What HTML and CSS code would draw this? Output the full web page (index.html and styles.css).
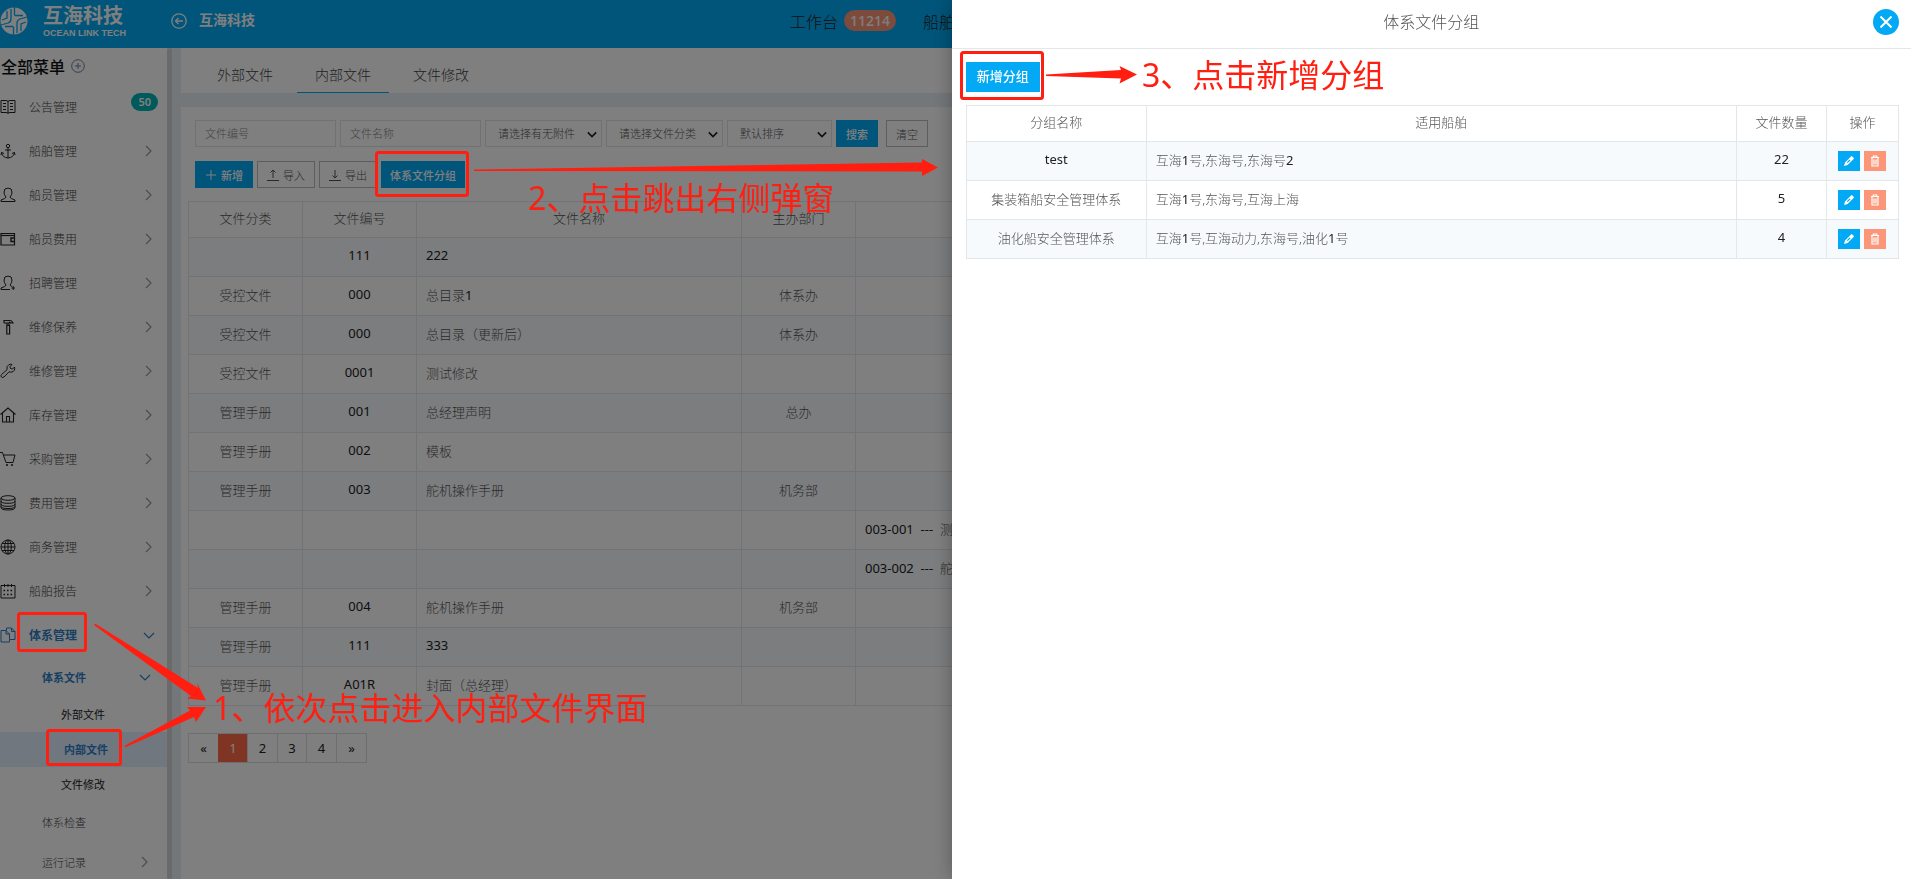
FILE: index.html
```html
<!DOCTYPE html>
<html lang="zh-CN">
<head>
<meta charset="utf-8">
<title>体系文件分组</title>
<link rel="stylesheet" href="styles.css">
</head>
<body>
<svg class="defs" aria-hidden="true">
  <symbol id="chev-r" viewBox="0 0 12 12"><path d="M3 1l5 5-5 5"/></symbol>
  <symbol id="chev-d" viewBox="0 0 12 12"><path d="M1 4l5 5 5-5"/></symbol>
  <symbol id="pencil" viewBox="0 0 12 12"><path d="M1 11l1-3.6L8 1.4q.6-.6 1.300 0l1.300 1.300q.6.6 0 1.300L4.600 10z" fill="#fff"/><path d="M4.300 7.700L7 5" stroke="#03a9f4" stroke-width="1.200"/></symbol>
  <symbol id="trash" viewBox="0 0 12 12"><path d="M2 2.500h8M4.300 2V1h3.400v1M3 3v8h6V3M5 4.500v5M7 4.500v5" fill="none" stroke="#fff" stroke-width="1.200"/></symbol>
</svg>
<div class="app">
  <header class="topbar">
    <div class="logo">
      <svg width="28" height="28" viewBox="0 0 28 28"><circle cx="14" cy="14" r="13.500" fill="#fff"/><path d="M14.500 0v8.500M15 8.500h8M11 2v10q0 3-3 4l-7 2M7 4v7l-5 2M13.500 28v-8.500M13 19.500H5M17 26V16q0-3 3-4l7-2M21 24v-7l5-2" fill="none" stroke="#03a9f4" stroke-width="1.300"/></svg>
      <div class="logo-text"><span class="logo-cn">互海科技</span><span class="logo-en">OCEAN LINK TECH</span></div>
    </div>
    <button class="back" aria-label="返回"><svg width="16" height="16" viewBox="0 0 16 16" fill="none" stroke="#fff" stroke-width="1.300"><circle cx="8" cy="8" r="7.200"/><path d="M12 8H4.500M7.500 5l-3 3 3 3"/></svg></button>
    <strong class="company">互海科技</strong>
    <nav class="topnav"><a href="#">工作台</a><span class="count">11214</span><a href="#" class="ship">船舶</a></nav>
  </header>
  <div class="body">
    <aside class="sidebar">
      <h2 class="menu-title">全部菜单 <svg width="14" height="14" viewBox="0 0 14 14" fill="none" stroke="#6a7f9c"><circle cx="7" cy="7" r="6.300"/><path d="M7 4v6M4 7h6"/></svg></h2>
      <ul class="menu">
        <li><a href="#"><svg class="ic" viewBox="0 0 16 16"><path d="M8 3v11.500M1 1.500h5q2 0 2 1.500 0-1.500 2-1.500h5v12h-5q-2 0-2 1 0-1-2-1H1zM3 4.500h3M3 7.500h3M3 10.500h3M10 4.500h3M10 7.500h3M10 10.500h3"/></svg>公告管理<span class="pill">50</span></a></li>
        <li><a href="#"><svg class="ic" viewBox="0 0 16 16"><circle cx="8" cy="3" r="1.700"/><path d="M8 5v10M5 7h6M1.500 9.500q1 5 6.500 5.500 5.500-.5 6.500-5.500M1 12l.6-2.500L4 10.500M15 12l-.6-2.500L12 10.500"/></svg>船舶管理<svg class="ch"><use href="#chev-r"/></svg></a></li>
        <li><a href="#"><svg class="ic" viewBox="0 0 16 16"><path d="M6 10q-2-2-2-5 0-4 4-4t4 4q0 3-2 5 0 1.500 5 3v1.500H1V13q5-1.500 5-3z"/></svg>船员管理<svg class="ch"><use href="#chev-r"/></svg></a></li>
        <li><a href="#"><svg class="ic" viewBox="0 0 16 16"><path d="M1 2.500h13.500v11.500H1z" stroke-width="1.200"/><path d="M1 4.500h13.500" stroke-width="1.200"/><path d="M14.500 7h-3.500v3.500h3.500" stroke-width="1.400"/></svg>船员费用<svg class="ch"><use href="#chev-r"/></svg></a></li>
        <li><a href="#"><svg class="ic" viewBox="0 0 16 16"><path d="M10 14.500H1V13q5-1.500 5-3-2-2-2-5 0-4 4-4t4 4q0 3-2 5 .5 1 2 1.500M11.500 13H15M13.200 11v4"/></svg>招聘管理<svg class="ch"><use href="#chev-r"/></svg></a></li>
        <li><a href="#"><svg class="ic" viewBox="0 0 16 16"><path d="M4 4V1.500h6q2 0 3 2.500h-2.500q0-1-1.500-1M4 4h5v2M7 4v3M6.800 6.500h2.800v8.500H6.800z" stroke-width="1.200"/></svg>维修保养<svg class="ch"><use href="#chev-r"/></svg></a></li>
        <li><a href="#"><svg class="ic" viewBox="0 0 16 16"><path d="M14.500 4q1 4-2.500 5-1.500.4-3-.2L4 14q-1.500 1-2.600 0-1-1.200.2-2.500L7 6.700Q6.300 3 9 1.600q1.500-.7 3-.2L10 3.700l.5 1.800 2 .5z"/></svg>维修管理<svg class="ch"><use href="#chev-r"/></svg></a></li>
        <li><a href="#"><svg class="ic" viewBox="0 0 16 16"><path d="M.5 7.500L8 1l7.500 6.500M2.500 6v9h11V6M6.500 15V9.500h3V15" stroke-width="1.100"/></svg>库存管理<svg class="ch"><use href="#chev-r"/></svg></a></li>
        <li><a href="#"><svg class="ic" viewBox="0 0 16 16"><path d="M0 1.500h2.500L6 11.500h7l2-7.500H3.500"/><circle cx="7" cy="14" r=".7"/><circle cx="12" cy="14" r=".7"/></svg>采购管理<svg class="ch"><use href="#chev-r"/></svg></a></li>
        <li><a href="#"><svg class="ic" viewBox="0 0 16 16"><ellipse cx="8" cy="3" rx="7" ry="2.300"/><path d="M1 3v9.500q0 2.500 7 2.500t7-2.500V3M1 6Q1 8.300 8 8.300T15 6M1 9q0 2.300 7 2.300T15 9M1 11.500q0 2 7 2t7-2"/></svg>费用管理<svg class="ch"><use href="#chev-r"/></svg></a></li>
        <li><a href="#"><svg class="ic" viewBox="0 0 16 16"><circle cx="8" cy="8" r="7"/><ellipse cx="8" cy="8" rx="3.300" ry="7"/><path d="M8 1v14M1 8h14M2 4.500h12M2 11.500h12"/></svg>商务管理<svg class="ch"><use href="#chev-r"/></svg></a></li>
        <li><a href="#"><svg class="ic" viewBox="0 0 16 16"><path d="M1 2.500h14v12.500H1zM4.500 1v3M8 1v3M11.500 1v3"/><path d="M3.500 7.500h9M3.500 11.500h9" stroke-width="1.600" stroke-dasharray="1.600 1.900"/></svg>船舶报告<svg class="ch"><use href="#chev-r"/></svg></a></li>
        <li><a href="#" class="on"><svg class="ic" viewBox="0 0 16 16"><path d="M6 3.500H1v11.500h8.500V12.500M6.500 1h5l3.500 3.500v8H9.500V7L6 3.500M11.500 1v3.500H15M6 3.500V7h3.500M6.500 1v2.500"/></svg>体系管理<svg class="ch"><use href="#chev-d"/></svg></a>
          <ul class="sub">
            <li><a href="#" class="on">体系文件<svg class="ch"><use href="#chev-d"/></svg></a>
              <ul class="leaf">
                <li><a href="#">外部文件</a></li>
                <li><a href="#" class="current">内部文件</a></li>
                <li><a href="#">文件修改</a></li>
              </ul>
            </li>
            <li><a href="#">体系检查</a></li>
            <li><a href="#">运行记录<svg class="ch"><use href="#chev-r"/></svg></a></li>
          </ul>
        </li>
      </ul>
    </aside>
    <div class="scrollbar"></div>
    <main class="main">
      <nav class="tabs"><a href="#">外部文件</a><a href="#" class="active">内部文件</a><a href="#">文件修改</a></nav>
      <section class="card">
        <form class="filters">
          <input type="text" placeholder="文件编号" aria-label="文件编号">
          <input type="text" placeholder="文件名称" aria-label="文件名称">
          <span class="sel"><select aria-label="附件"><option>请选择有无附件</option></select><svg viewBox="0 0 12 12"><use href="#chev-d"/></svg></span>
          <span class="sel"><select aria-label="分类"><option>请选择文件分类</option></select><svg viewBox="0 0 12 12"><use href="#chev-d"/></svg></span>
          <span class="sel short"><select aria-label="排序"><option>默认排序</option></select><svg viewBox="0 0 12 12"><use href="#chev-d"/></svg></span>
          <button type="button" class="btn primary">搜索</button>
          <button type="button" class="btn clear">清空</button>
        </form>
        <div class="actions">
          <button class="btn primary"><svg viewBox="0 0 12 12"><path d="M6 1v10M1 6h10"/></svg>新增</button>
          <button class="btn"><svg viewBox="0 0 12 12"><path d="M6 9V1M3.500 3.500L6 1l2.500 2.500M0 11.500h12"/></svg>导入</button>
          <button class="btn"><svg viewBox="0 0 12 12"><path d="M6 1v8M3.500 6.500L6 9l2.500-2.500M0 11.500h12"/></svg>导出</button>
          <button class="btn primary">体系文件分组</button>
        </div>
        <table class="grid files">
          <colgroup><col class="c-s"><col class="c-s"><col class="c-name"><col class="c-s"><col></colgroup>
          <thead><tr><th>文件分类</th><th>文件编号</th><th>文件名称</th><th>主办部门</th><th></th></tr></thead>
          <tbody>
            <tr><td></td><td><b>111</b></td><td><b>222</b></td><td></td><td></td></tr>
            <tr><td>受控文件</td><td><b>000</b></td><td>总目录<b>1</b></td><td>体系办</td><td></td></tr>
            <tr><td>受控文件</td><td><b>000</b></td><td>总目录（更新后）</td><td>体系办</td><td></td></tr>
            <tr><td>受控文件</td><td><b>0001</b></td><td>测试修改</td><td></td><td></td></tr>
            <tr><td>管理手册</td><td><b>001</b></td><td>总经理声明</td><td>总办</td><td></td></tr>
            <tr><td>管理手册</td><td><b>002</b></td><td>模板</td><td></td><td></td></tr>
            <tr><td>管理手册</td><td><b>003</b></td><td>舵机操作手册</td><td>机务部</td><td></td></tr>
            <tr><td></td><td></td><td></td><td></td><td><b>003-001 &nbsp;---&nbsp; </b>测试</td></tr>
            <tr><td></td><td></td><td></td><td></td><td><b>003-002 &nbsp;---&nbsp; </b>舵机</td></tr>
            <tr><td>管理手册</td><td><b>004</b></td><td>舵机操作手册</td><td>机务部</td><td></td></tr>
            <tr><td>管理手册</td><td><b>111</b></td><td><b>333</b></td><td></td><td></td></tr>
            <tr><td>管理手册</td><td><b>A01R</b></td><td>封面（总经理）</td><td></td><td></td></tr>
          </tbody>
        </table>
        <nav class="pager"><a href="#">«</a><a href="#" class="active">1</a><a href="#">2</a><a href="#">3</a><a href="#">4</a><a href="#">»</a></nav>
      </section>
    </main>
  </div>
</div>
<div class="mask"></div>
<section class="drawer" role="dialog" aria-labelledby="drawer-title">
  <header class="drawer-head">
    <h1 id="drawer-title">体系文件分组</h1>
    <button class="close" aria-label="关闭"><svg width="12" height="12" viewBox="0 0 12 12"><path d="M0.500 0.500l11 11M11.500 0.500l-11 11" stroke="#fff" stroke-width="2"/></svg></button>
  </header>
  <div class="drawer-body">
    <button class="add">新增分组</button>
    <table class="grid groups">
      <colgroup><col class="g-name"><col><col class="g-count"><col class="g-op"></colgroup>
      <thead><tr><th>分组名称</th><th>适用船舶</th><th>文件数量</th><th>操作</th></tr></thead>
      <tbody>
        <tr><td><b>test</b></td><td>互海<b>1</b>号,东海号,东海号<b>2</b></td><td><b>22</b></td><td><div class="ops"><button class="op" aria-label="编辑"><svg><use href="#pencil"/></svg></button><button class="op del" aria-label="删除"><svg><use href="#trash"/></svg></button></div></td></tr>
        <tr><td>集装箱船安全管理体系</td><td>互海<b>1</b>号,东海号,互海上海</td><td><b>5</b></td><td><div class="ops"><button class="op" aria-label="编辑"><svg><use href="#pencil"/></svg></button><button class="op del" aria-label="删除"><svg><use href="#trash"/></svg></button></div></td></tr>
        <tr><td>油化船安全管理体系</td><td>互海<b>1</b>号,互海动力,东海号,油化<b>1</b>号</td><td><b>4</b></td><td><div class="ops"><button class="op" aria-label="编辑"><svg><use href="#pencil"/></svg></button><button class="op del" aria-label="删除"><svg><use href="#trash"/></svg></button></div></td></tr>
      </tbody>
    </table>
  </div>
</section>
<div class="notes">
  <svg class="ink" width="1400" height="879" viewBox="0 0 1400 879" aria-hidden="true">
    <g fill="none" stroke="#ff1e10" stroke-width="3">
      <rect x="376.500" y="152.500" width="91" height="43" rx="2"/>
      <rect x="961.500" y="52.500" width="81" height="46" rx="2"/>
      <rect x="18.500" y="613.500" width="67" height="37" rx="2"/>
      <rect x="47.500" y="730.500" width="73" height="34" rx="2"/>
    </g>
    <g fill="#ff1e10">
      <path d="M474 169.500L922 162.500V159L938 167.500L922 176V171.500L474 171z"/>
      <path d="M1046 74.500L1121 70L1119.500 66L1137 74.500L1119.500 83.500L1121 78.500L1046 76z"/>
      <path d="M95 623.500L198 688L197 683L206 700.500L187 698.500L191 696L94 625z"/>
      <path d="M125 745.500L190 710.500L187 707L206 707L196 722L194 717L125 747.500z"/>
    </g>
  </svg>
  <p class="note n1">1、依次点击进入内部文件界面</p>
  <p class="note n2">2、点击跳出右侧弹窗</p>
  <p class="note n3">3、点击新增分组</p>
</div>
</body>
</html>
```

FILE: styles.css
```css
* { box-sizing: border-box; }
html, body { height: 100%; }
body {
  margin: 0;
  overflow: hidden;
  font-family: "Noto Sans", "Noto Sans CJK SC", sans-serif;
  font-size: 13px;
  font-weight: 300;
  color: #555;
  background: #fff;
}
a { color: inherit; text-decoration: none; }
ul { list-style: none; margin: 0; padding: 0; }
button, input, select { font: inherit; color: inherit; margin: 0; padding: 0; border: 0; border-radius: 0; }
b { font-weight: 400; color: #212121; }
.defs { position: absolute; width: 0; height: 0; }

.app { display: flex; flex-direction: column; height: 100vh; overflow: hidden; }
.topbar { display: flex; align-items: center; flex: none; height: 48px; padding-bottom: 7px; background: #03a9f4; color: #fff; box-shadow: 0 1px 3px rgba(0,0,0,.3); }
.logo { display: flex; align-items: center; gap: 15px; width: 171px; }
.logo-text { display: flex; flex-direction: column; }
.logo-cn { font-size: 20px; line-height: 24px; font-weight: 700; }
.logo-en { font: 700 9px/10px "Liberation Sans", sans-serif; }
.back { display: flex; background: none; }
.company { margin-left: 12px; font-size: 14px; line-height: 18px; padding-bottom: 2px; font-weight: 700; }
.topnav { display: flex; align-items: center; margin-left: 535px; font-size: 16px; color: #222; white-space: nowrap; }
.count { margin-left: 6px; padding: 0 6px; border-radius: 11px; background: #fb9678; color: #fff; font-size: 14px; line-height: 21px; font-weight: 500; }
.ship { margin-left: 27px; }

.body { display: flex; flex: 1; min-height: 0; background: #e9eef4; }
.sidebar { width: 167px; flex: none; overflow: hidden; background: #fff; }
.menu-title { display: flex; align-items: center; gap: 6px; height: 37px; margin: 0; padding: 0 0 2px 1px; font-size: 16px; font-weight: 500; color: #111; }
.menu a { display: flex; align-items: center; height: 44px; padding: 0 12px 1px 0; font-size: 12px; color: #444; }
.ic { width: 16px; height: 16px; margin-right: 13px; fill: none; stroke: #222; stroke-width: 1; }
.ch { width: 12px; height: 12px; margin-left: auto; fill: none; stroke: #999; stroke-width: 1.2; }
.pill { align-self: flex-start; margin: 8px -3px 0 auto; padding: 0 7px; border-radius: 9px; background: #00b5b8; color: #fff; font-size: 11px; line-height: 18px; font-weight: 600; }
.menu a.on { color: #2e7fc8; font-weight: 700; }
.on .ic, .on .ch { stroke: #2e7fc8; }
.menu .sub a { height: 40px; padding: 0 16px 1px 42px; font-size: 11px; }
.menu .leaf a { height: 35px; padding-left: 61px; color: #222; font-weight: 400; }
.menu .leaf a.current { padding-left: 64px; background: #e3efff; color: #2e7fc8; font-weight: 700; }
.scrollbar { flex: none; width: 5px; border-radius: 3px; background: #d4d4d4; }

.main { display: flex; flex-direction: column; flex: 1; min-width: 0; gap: 14px; margin-left: 9px; }
.tabs { display: flex; gap: 6px; height: 45px; padding-left: 18px; background: #fff; font-size: 14px; line-height: 54px; color: #444; }
.tabs a { padding: 0 18px; }
.tabs .active { border-bottom: 1px solid #03a9f4; }
.card { flex: 1; padding: 13px 7px; background: #fff; }
.filters, .actions { display: flex; gap: 4px; padding-left: 7px; font-size: 11px; }
.actions { margin-top: 14px; }
.filters input, .sel { width: 141px; height: 27px; border: 1px solid #e0e3e6; background: #fff; }
.filters input { padding: 0 9px; }
.filters input::placeholder { color: #888; opacity: 1; }
.sel { display: flex; align-items: center; width: 117px; padding-right: 4px; }
.sel.short { width: 105px; }
.sel select { flex: 1; min-width: 0; height: 25px; padding-left: 12px; appearance: none; background: none; }
.sel svg { flex: none; width: 10px; height: 10px; fill: none; stroke: #222; stroke-width: 2; }
.btn { display: flex; align-items: center; gap: 4px; height: 27px; padding: 0 9px; border: 1px solid #bbb; background: #fff; font-size: 11px; white-space: nowrap; color: #555; }
.btn svg { width: 12px; height: 12px; fill: none; stroke: currentColor; }
.btn.primary { border-color: #03a9f4; background: #03a9f4; color: #fff; font-weight: 500; }
.btn.clear { margin-left: 4px; }
.actions .btn:last-child { padding: 0 8px; }

.grid { width: 100%; border-collapse: collapse; table-layout: fixed; }
.grid th, .grid td { height: 39px; padding: 0 9px 4px; border: 1px solid #e4e7ea; font-weight: 300; text-align: center; white-space: nowrap; }
.grid th { height: 36px; }
.grid tbody tr:nth-child(odd) { background: #f7fafc; }
.files { margin-top: 13px; }
.c-s { width: 114px; }
.c-name { width: 325px; }
.files td:nth-child(3), .files td:nth-child(5), .groups td:nth-child(2) { text-align: left; }
.pager { display: flex; width: max-content; margin-top: 27px; border: 1px solid #ddd; color: #222; font-weight: 400; }
.pager a { width: 30px; line-height: 28px; border-left: 1px solid #ddd; text-align: center; }
.pager a:first-child { border-left: 0; width: 29px; }
.pager a:nth-child(even) { width: 29px; }
.pager a:last-child { width: 30px; }
.pager .active { border-color: #ff6849; background: #ff6849; color: #fff; }

.mask { position: fixed; inset: 0; background: rgba(0,0,0,.5); }
.drawer { position: fixed; top: 0; right: 0; bottom: 0; width: 50.2%; background: #fff; box-shadow: 0 0 18px rgba(0,0,0,.3); }
.drawer-head { display: flex; align-items: center; height: 49px; padding: 0 12px 5px 38px; border-bottom: 1px solid #e4e7ea; }
.drawer-head h1 { flex: 1; margin: 0; padding-bottom: 2px; font-size: 16px; font-weight: 300; text-align: center; }
.close { display: flex; align-items: center; justify-content: center; width: 26px; height: 26px; border-radius: 50%; background: #03a9f4; }
.drawer-body { padding: 13px 12px 13px 14px; }
.add { display: block; height: 30px; padding: 0 11px 3px; background: #03a9f4; color: #fff; font-weight: 500; }
.groups { margin-top: 13px; }
.g-name { width: 180px; }
.g-count { width: 90px; }
.g-op { width: 72px; }
.ops { display: flex; gap: 4px; justify-content: center; margin: 3px -8px 0 -9px; }
.op { display: flex; align-items: center; justify-content: center; width: 22px; height: 20px; background: #03a9f4; }
.op svg { width: 12px; height: 12px; }
.op.del { background: #fb9678; }

.notes { position: fixed; inset: 0; overflow: hidden; pointer-events: none; }
.ink { display: block; }
.note { position: absolute; margin: 0; font-size: 32px; line-height: 40px; font-weight: 400; color: #ff1e10; white-space: nowrap; }
.n1 { left: 213px; top: 688px; }
.n2 { left: 528px; top: 178px; }
.n3 { left: 1142px; top: 55px; }
```
